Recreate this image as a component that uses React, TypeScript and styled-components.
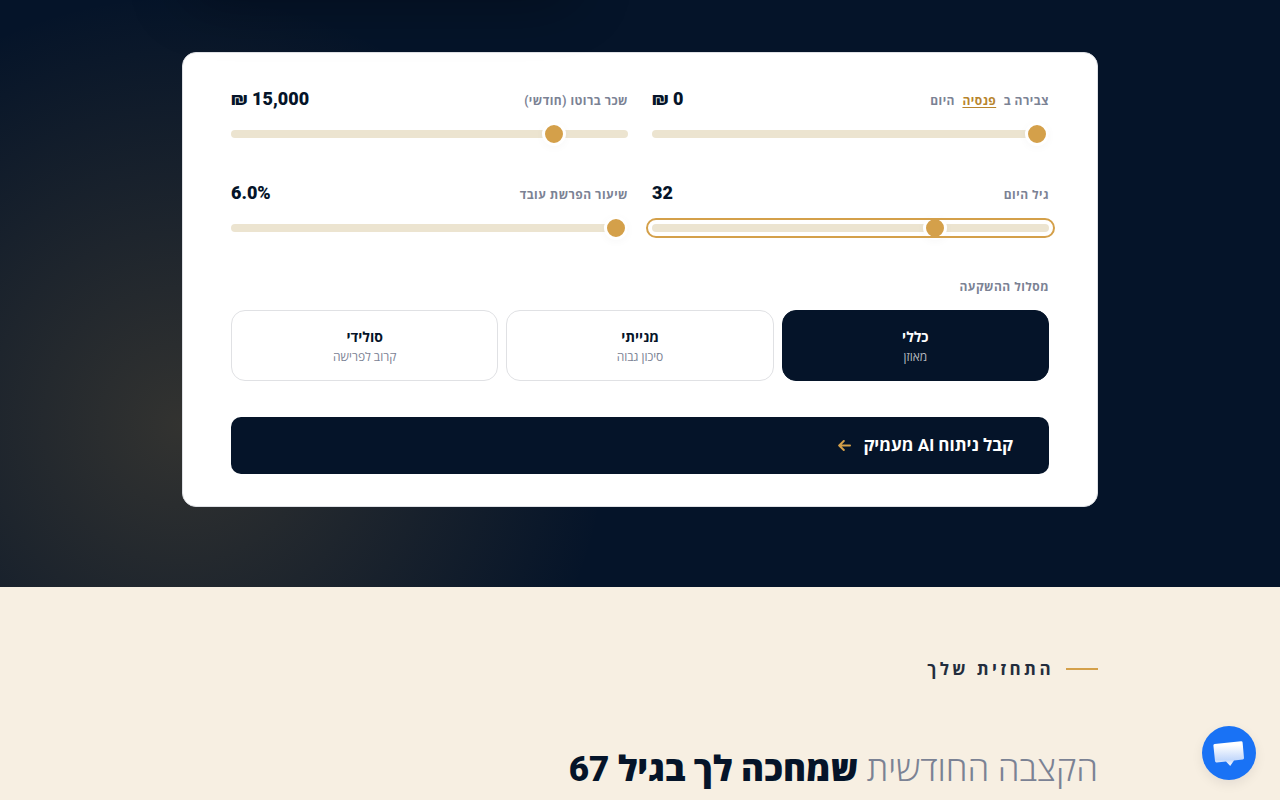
import { useState } from "react";
import styled, { createGlobalStyle, css } from "styled-components";

const navy = "#051429";
const gold = "#d4a04a";
const muted = "#7b8294";

const GlobalStyle = createGlobalStyle`
  *, *::before, *::after { box-sizing: border-box; }
  body {
    margin: 0;
    background: #f7efe2;
    color: ${navy};
    font-family: Roboto, "Open Sans", "Noto Sans", sans-serif;
    -webkit-font-smoothing: antialiased;
  }
  button, input { font-family: inherit; }
`;

const Page = styled.main`
  direction: rtl;
  overflow-x: hidden;
`;

const Hero = styled.section`
  position: relative;
  overflow: hidden;
  padding: 52px 0 80px;
  background:
    radial-gradient(circle 430px at 180px 425px, rgba(212, 160, 74, 0.22), rgba(212, 160, 74, 0) 100%),
    ${navy};

  &::before {
    content: "";
    position: absolute;
    z-index: 1;
    top: -80px;
    left: 182px;
    width: 397px;
    height: 60px;
    border-radius: 20px;
    box-shadow: 0 24px 60px -8px rgba(0, 0, 0, 0.4);
    pointer-events: none;
  }
`;

const Container = styled.div`
  max-width: 980px;
  margin: 0 auto;
  padding: 0 32px;
`;

const Card = styled.form`
  padding: 32px 48px;
  border: 1px solid #dfe1e5;
  border-radius: 14px;
  background: #fff;
`;

const Sliders = styled.div`
  display: grid;
  grid-template-columns: 1fr 1fr;
  gap: 41px 24px;
`;

const Field = styled.div`
  display: flex;
  flex-direction: column;
  gap: 18px;
`;

const FieldHead = styled.div`
  display: flex;
  justify-content: space-between;
  align-items: baseline;
  height: 27px;
  line-height: 27px;
`;

const labelText = css`
  color: ${muted};
  font-size: 12px;
  font-weight: 700;
  letter-spacing: 0.04em;
`;

const Label = styled.label`
  ${labelText}
`;

const Term = styled.a`
  margin: 0 4px;
  color: #b8842c;
  text-decoration: underline;
  text-underline-offset: 2px;
`;

const Value = styled.output`
  font-size: 18px;
  font-weight: 900;
  direction: ltr;
`;

const Range = styled.input`
  appearance: none;
  display: block;
  width: 100%;
  height: 8px;
  margin: 0;
  border-radius: 4px;
  background: #ece4d0;
  cursor: pointer;
  outline: none;

  &:focus {
    outline: 2px solid ${gold};
    outline-offset: 4px;
  }

  &::-webkit-slider-thumb {
    appearance: none;
    width: 24px;
    height: 24px;
    border: 3px solid #fff;
    border-radius: 50%;
    background: ${gold};
    box-shadow: 0 2px 8px rgba(4, 18, 40, 0.03);
  }
`;

const Tracks = styled.fieldset`
  display: grid;
  grid-template-columns: repeat(3, 1fr);
  gap: 8px;
  margin: 45px 0 36px;
  padding: 0;
  border: 0;
`;

const Legend = styled.legend`
  ${labelText}
  padding: 0;
  margin-bottom: 13px;
  line-height: 20px;
`;

const Track = styled.button<{ $selected: boolean }>`
  display: flex;
  flex-direction: column;
  align-items: center;
  gap: 2px;
  padding: 16px 12px 14px;
  border: 1px solid ${(p) => (p.$selected ? navy : "#e0e1e4")};
  border-radius: 14px;
  background: ${(p) => (p.$selected ? navy : "#fff")};
  color: ${(p) => (p.$selected ? "#fff" : navy)};
  cursor: pointer;
`;

const TrackName = styled.span`
  font-size: 14px;
  font-weight: 700;
  line-height: 20px;
`;

const TrackNote = styled.span<{ $selected: boolean }>`
  color: ${(p) => (p.$selected ? "#b4b8be" : muted)};
  font-size: 12px;
  line-height: 17px;
`;

const Submit = styled.button`
  display: flex;
  align-items: center;
  gap: 12px;
  width: 100%;
  padding: 16px 36px;
  border: 0;
  border-radius: 10px;
  background: ${navy};
  color: #fff;
  font-size: 17px;
  font-weight: 700;
  line-height: 25px;
  cursor: pointer;
`;

const Forecast = styled.section`
  padding: 68px 0 2px;
`;

const Eyebrow = styled.p`
  display: flex;
  align-items: center;
  gap: 12px;
  margin: 0 0 64px;
  color: #232d3d;
  font-size: 17px;
  font-weight: 700;
  letter-spacing: 0.2em;
  line-height: 28px;

  &::before {
    content: "";
    width: 32px;
    height: 2px;
    background: ${gold};
  }
`;

const Title = styled.h2`
  margin: 0;
  font-size: 35px;
  font-weight: 900;
  line-height: 46px;
`;

const Light = styled.span`
  color: ${muted};
  font-weight: 300;
`;

const ChatButton = styled.button`
  position: fixed;
  right: 24px;
  bottom: 20px;
  width: 54px;
  height: 54px;
  padding: 0;
  border: 0;
  border-radius: 50%;
  background: #1972f5;
  box-shadow: 0 4px 12px rgba(4, 18, 40, 0.08);
  cursor: pointer;

  svg { display: block; }
`;

const options = [
  { id: "general", name: "כללי", note: "מאוזן" },
  { id: "stocks", name: "מנייתי", note: "סיכון גבוה" },
  { id: "solid", name: "סולידי", note: "קרוב לפרישה" },
];

export default function App() {
  const [balance, setBalance] = useState(0);
  const [salary, setSalary] = useState(15000);
  const [age, setAge] = useState(32);
  const [rate, setRate] = useState(6);
  const [track, setTrack] = useState("general");

  return (
    <>
      <GlobalStyle />
      <Page lang="he">
        <Hero>
          <Container>
            <Card onSubmit={(e) => e.preventDefault()}>
              <Sliders>
                <Field>
                  <FieldHead>
                    <Label htmlFor="balance">
                      צבירה ב <Term href="#pension">פנסיה</Term> היום
                    </Label>
                    <Value htmlFor="balance">₪ {balance.toLocaleString("en-US")}</Value>
                  </FieldHead>
                  <Range id="balance" type="range" min={0} max={2000000} step={10000} value={balance}
                    onChange={(e) => setBalance(Number(e.target.value))} />
                </Field>
                <Field>
                  <FieldHead>
                    <Label htmlFor="salary">שכר ברוטו (חודשי)</Label>
                    <Value htmlFor="salary">₪ {salary.toLocaleString("en-US")}</Value>
                  </FieldHead>
                  <Range id="salary" type="range" min={5000} max={65000} step={500} value={salary}
                    onChange={(e) => setSalary(Number(e.target.value))} />
                </Field>
                <Field>
                  <FieldHead>
                    <Label htmlFor="age">גיל היום</Label>
                    <Value htmlFor="age">{age}</Value>
                  </FieldHead>
                  <Range id="age" type="range" min={20} max={64} value={age} autoFocus
                    onChange={(e) => setAge(Number(e.target.value))} />
                </Field>
                <Field>
                  <FieldHead>
                    <Label htmlFor="rate">שיעור הפרשת עובד</Label>
                    <Value htmlFor="rate">{rate.toFixed(1)}%</Value>
                  </FieldHead>
                  <Range id="rate" type="range" min={6} max={7} step={0.1} value={rate}
                    onChange={(e) => setRate(Number(e.target.value))} />
                </Field>
              </Sliders>

              <Tracks>
                <Legend>מסלול ההשקעה</Legend>
                {options.map((o) => (
                  <Track key={o.id} type="button" $selected={o.id === track}
                    aria-pressed={o.id === track} onClick={() => setTrack(o.id)}>
                    <TrackName>{o.name}</TrackName>
                    <TrackNote $selected={o.id === track}>{o.note}</TrackNote>
                  </Track>
                ))}
              </Tracks>

              <Submit type="submit">
                קבל ניתוח AI מעמיק
                <svg width="13" height="12" viewBox="0 0 13 12" fill="none" stroke={gold}
                  strokeWidth="2" strokeLinecap="round" strokeLinejoin="round" aria-hidden="true">
                  <path d="M12 5.5H1.5M5.8 1L1.2 5.5l4.6 4.5" />
                </svg>
              </Submit>
            </Card>
          </Container>
        </Hero>

        <Forecast>
          <Container>
            <Eyebrow>התחזית שלך</Eyebrow>
            <Title>
              <Light>הקצבה החודשית</Light> שמחכה לך בגיל 67
            </Title>
          </Container>
        </Forecast>

        <ChatButton type="button" aria-label="צ'אט">
          <svg width="54" height="54" viewBox="0 0 54 54" aria-hidden="true">
            <defs>
              <linearGradient id="bubble" x1="0" y1="0" x2="0" y2="1">
                <stop offset="0.15" stopColor="#fff" />
                <stop offset="0.75" stopColor="#c3d8fb" />
                <stop offset="0.9" stopColor="#e6effe" />
              </linearGradient>
            </defs>
            <path fill="url(#bubble)"
              d="M12.6 17.9L39 15.2Q40.4 15 40.6 16.4L42 32Q42 33.4 40.8 33.6L32 34.6L28.2 40L24 35.4L14.6 36.4Q13.2 36.5 13 35.1L11.4 19.4Q11.3 18.1 12.6 17.9Z" />
          </svg>
        </ChatButton>
      </Page>
    </>
  );
}
